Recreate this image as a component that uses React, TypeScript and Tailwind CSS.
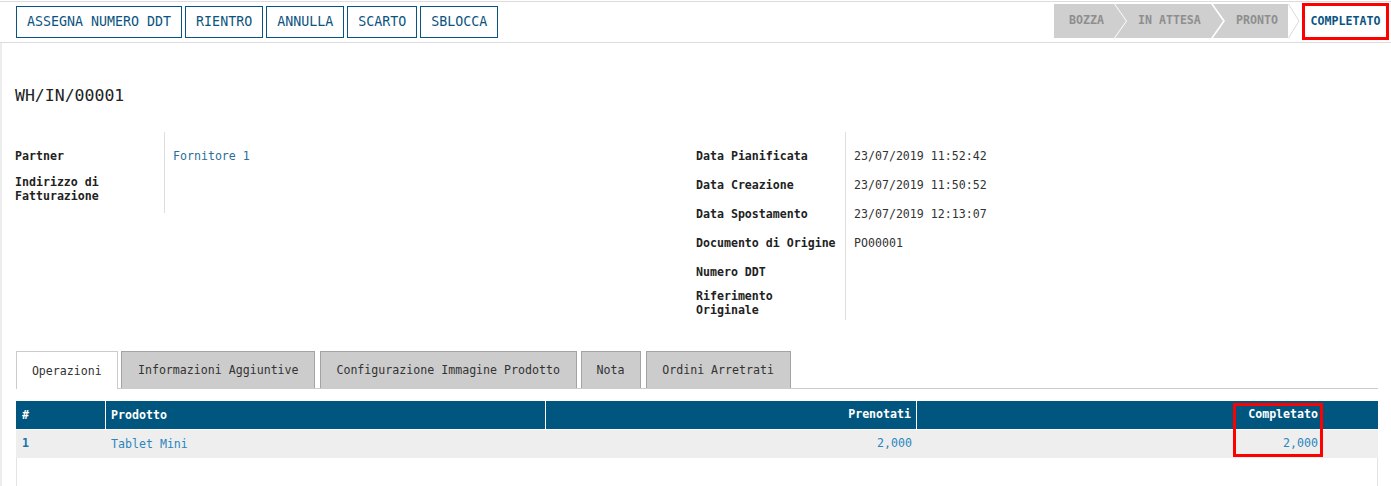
import React from "react";

const blue = "text-[#0b5481]";

function Btn({ children }: { children: React.ReactNode }) {
  return (
    <button className={`h-[32px] px-[10px] border border-[#0b5481] ${blue} text-[13.3px] leading-none bg-white uppercase`}>
      {children}
    </button>
  );
}

function Condensed({ children, origin = "origin-left" }: { children: React.ReactNode; origin?: string }) {
  return <span className={`inline-block scale-x-[0.9] ${origin} text-[12.9px]`}>{children}</span>;
}

export default function App() {
  return (
    <div className="w-[1391px] h-[486px] overflow-hidden bg-white font-['DejaVu_Sans_Mono',monospace] text-[11.6px] text-[#222]">
      {/* top bar */}
      <div className="mt-px h-[42px] border-t border-b border-[#dcdcdc] flex justify-between">
        <div className="flex gap-[3px] pl-[16px] pt-[4px] items-start">
          <Btn>Assegna numero DDT</Btn>
          <Btn>Rientro</Btn>
          <Btn>Annulla</Btn>
          <Btn>Scarto</Btn>
          <Btn>Sblocca</Btn>
        </div>
        <div className="flex items-start pr-[2px]">
          <div className="mt-[2px] h-[34px] w-[72px] bg-[#cfcfcf] text-[#8e8e8e] font-bold flex items-center pl-[15px] [clip-path:polygon(0_0,calc(100%_-_12px)_0,100%_50%,calc(100%_-_12px)_100%,0_100%)]">
            BOZZA
          </div>
          <div className="mt-[2px] -ml-[11px] h-[34px] w-[108px] bg-[#cfcfcf] text-[#8e8e8e] font-bold flex items-center pl-[23px] [clip-path:polygon(0_0,calc(100%_-_12px)_0,100%_50%,calc(100%_-_12px)_100%,0_100%,12px_50%)]">
            IN ATTESA
          </div>
          <div className="mt-[2px] -ml-[10px] h-[34px] w-[75px] bg-[#cfcfcf] text-[#8e8e8e] font-bold flex items-center pl-[23px] [clip-path:polygon(0_0,100%_0,100%_100%,0_100%,12px_50%)]">
            PRONTO
          </div>
          <svg width="12" height="34" className="mt-[2px]" viewBox="0 0 12 34">
            <polyline points="0.5,0 11,17 0.5,34" fill="none" stroke="#dadada" strokeWidth="1" />
          </svg>
          <div className="ml-[2px] mt-px h-[37px] w-[87px] border-[3px] border-[#ff0000] flex items-center justify-center font-bold text-[#0b5481]">
            COMPLETATO
          </div>
        </div>
      </div>

      {/* sheet */}
      <div className="border-l-[2px] border-[#ececec] pl-[13px] h-[443px]">
        <div className="pt-[43px] text-[16.5px] leading-[20px] text-[#222]">WH/IN/00001</div>

        <div className="mt-[26px] flex">
          {/* left group */}
          <div className="w-[681px] flex flex-col">
            <div className="flex">
              <div className="w-[149px] pt-[9px] h-[38px] flex items-center font-bold leading-[14px]">
                Partner
              </div>
              <div className="border-l border-[#dedede] pl-[8px] pt-[9px] h-[38px] flex items-center">
                <span className="text-[#2c6e96] leading-[14px]">Fornitore 1</span>
              </div>
            </div>
            <div className="flex">
              <div className="w-[149px] pt-[5px] pb-[10px] font-bold leading-[14px] pr-[10px]">
                Indirizzo di Fatturazione
              </div>
              <div className="border-l border-[#dedede] pl-[8px]"></div>
            </div>
          </div>

          {/* right group */}
          <div className="flex flex-col">
            {[
              ["Data Pianificata", "23/07/2019 11:52:42"],
              ["Data Creazione", "23/07/2019 11:50:52"],
              ["Data Spostamento", "23/07/2019 12:13:07"],
              ["Documento di Origine", "PO00001"],
              ["Numero DDT", ""],
            ].map(([l, v], i) => (
              <div key={l} className="flex">
                <div className={`w-[149px] flex items-center font-bold leading-[14px] ${i === 0 ? "h-[38px] pt-[9px]" : "h-[29px]"}`}>
                  {l}
                </div>
                <div className={`border-l border-[#dedede] pl-[8px] flex items-center leading-[14px] text-[#333] ${i === 0 ? "h-[38px] pt-[9px]" : "h-[29px]"}`}>
                  {v}
                </div>
              </div>
            ))}
            <div className="flex">
              <div className="w-[149px] pt-[3px] pb-[3px] font-bold leading-[14px] pr-[20px]">Riferimento Originale</div>
              <div className="border-l border-[#dedede] pl-[8px]"></div>
            </div>
          </div>
        </div>

        {/* tabs */}
        <div className="mt-[32px] ml-px w-[1362px] h-[37px] border-b border-[#cccccc] flex items-end">
          <div className="w-[102px] h-[38px] -mb-px bg-white border border-b-0 border-[#cccccc] flex items-center justify-center text-[#333]">
            <Condensed origin="origin-center">Operazioni</Condensed>
          </div>
          <div className="ml-[3px] w-[194px] h-[37px] bg-[#cccccc] border border-b-0 border-[#a3a3a3] flex items-center justify-center text-[#333]">
            <Condensed origin="origin-center">Informazioni Aggiuntive</Condensed>
          </div>
          <div className="ml-[5px] w-[257px] h-[37px] bg-[#cccccc] border border-b-0 border-[#a3a3a3] flex items-center justify-center text-[#333]">
            <Condensed origin="origin-center">Configurazione Immagine Prodotto</Condensed>
          </div>
          <div className="ml-[4px] w-[60px] h-[37px] bg-[#cccccc] border border-b-0 border-[#a3a3a3] flex items-center justify-center text-[#333]">
            <Condensed origin="origin-center">Nota</Condensed>
          </div>
          <div className="ml-[5px] w-[145px] h-[37px] bg-[#cccccc] border border-b-0 border-[#a3a3a3] flex items-center justify-center text-[#333]">
            <Condensed origin="origin-center">Ordini Arretrati</Condensed>
          </div>
        </div>

        {/* table */}
        <div className="relative mt-[12px] ml-px w-[1362px]">
          <div className="grid grid-cols-[90px_440px_371px_407px_54px] h-[28px] bg-[#00567e] text-white font-bold">
            <div className="border-r border-white pl-[6px] flex items-center"><Condensed>#</Condensed></div>
            <div className="border-r border-white pl-[5px] flex items-center"><Condensed>Prodotto</Condensed></div>
            <div className="border-r border-white pr-[5px] flex items-center justify-end">Prenotati</div>
            <div className="pr-[6px] flex items-center justify-end">Completato</div>
            <div></div>
          </div>
          <div className="grid grid-cols-[90px_440px_371px_407px_54px] h-[28px] mt-px bg-[#eeeeee]">
            <div className="pl-[6px] flex items-center font-bold text-[#1b72a8]">1</div>
            <div className="pl-[5px] flex items-center text-[#2a86bd]"><Condensed>Tablet Mini</Condensed></div>
            <div className="pr-[5px] flex items-center justify-end text-[#2a86bd]">2,000</div>
            <div className="pr-[6px] flex items-center justify-end text-[#2a86bd]">2,000</div>
            <div></div>
          </div>
          <div className="h-[29px] border border-t-0 border-[#e3e3e3] bg-white"></div>
          <div className="absolute left-[1217px] top-[2px] w-[90px] h-[54px] border-[3px] border-[#ff0000]"></div>
        </div>
      </div>
    </div>
  );
}
